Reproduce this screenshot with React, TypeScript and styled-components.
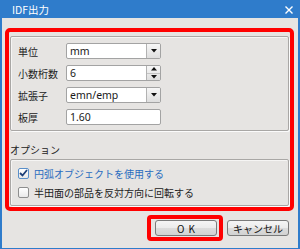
import styled, { createGlobalStyle } from "styled-components";

const Global = createGlobalStyle`
  html, body {
    margin: 0;
    padding: 0;
    background: #ffffff;
  }
  * { box-sizing: border-box; }
`;

const jp = `"Noto Sans CJK JP", "Noto Sans", sans-serif`;

const Frame = styled.div`
  width: 300px;
  height: 249px;
  background: #2f7ccb;
  padding: 0 2px 1px 2px;
  display: flex;
  flex-direction: column;
`;

const TitleBar = styled.div`
  height: 18px;
  display: flex;
  align-items: center;
  justify-content: space-between;
  padding: 0 5px 0 10px;
  color: #ffffff;
  font-family: ${jp};
  font-size: 10.5px;
`;

const CloseIcon = styled.svg`
  width: 8px;
  height: 8px;
  margin-top: 1px;
`;

const Body = styled.div`
  flex: 1;
  background: #e6e4e2;
  display: flex;
  flex-direction: column;
  font-family: ${jp};
  font-size: 10px;
  color: #222;
`;

const RedFrame = styled.div`
  margin: 10px 0 0 3px;
  width: 289px;
  height: 183px;
  border: 4px solid #ff0000;
  border-radius: 5px;
  padding: 4px 1px 0 1px;
  display: flex;
  flex-direction: column;
`;

const GroupBox = styled.div<{ $h: number }>`
  height: ${(p) => p.$h}px;
  border: 1px solid #a9a7a5;
  border-radius: 2px;
  box-shadow: 1px 1px 0 #fbfbfb, inset 1px 1px 0 #f6f5f4;
`;

const FieldGrid = styled.div`
  display: grid;
  grid-template-columns: 48px 95px;
  grid-auto-rows: 16px;
  row-gap: 6px;
  padding: 6px 0 0 7px;
`;

const Label = styled.div`
  display: flex;
  align-items: center;
  font-size: 10px;
  color: #222;
`;

const Field = styled.div`
  display: flex;
  height: 16px;
  border: 1px solid #a3a3a3;
  border-radius: 2px;
  background: #ffffff;
  overflow: hidden;
`;

const FieldText = styled.div`
  flex: 1;
  padding-left: 3px;
  display: flex;
  align-items: center;
  font-family: "Noto Sans", "Open Sans", sans-serif;
  font-size: 10.5px;
  color: #1a1a1a;
`;

const SideButton = styled.div`
  width: 14px;
  border-left: 1px solid #b2b2b2;
  background: linear-gradient(#f7f7f7, #dedede);
  display: flex;
  flex-direction: column;
  align-items: center;
  justify-content: center;
`;

const SpinHalf = styled.div<{ $top?: boolean }>`
  flex: 1;
  width: 100%;
  display: flex;
  align-items: center;
  justify-content: center;
  border-bottom: ${(p) => (p.$top ? "1px solid #c4c4c4" : "none")};
`;

const Tri = styled.svg`
  width: 6px;
  height: 4px;
`;

const SectionLabel = styled.div`
  margin: 12px 0 3px 0;
  height: 13px;
  line-height: 13px;
  font-size: 10px;
  color: #222;
`;

const CheckList = styled.div`
  display: flex;
  flex-direction: column;
  gap: 5px;
  padding: 6px 0 0 7px;
`;

const CheckRow = styled.div<{ $active?: boolean }>`
  height: 14px;
  display: flex;
  align-items: center;
  gap: 5px;
  color: ${(p) => (p.$active ? "#2a6cbf" : "#222")};
  font-size: 10px;
`;

const Box = styled.div<{ $checked?: boolean }>`
  width: 11px;
  height: 11px;
  border: 1px solid ${(p) => (p.$checked ? "#5a8fc9" : "#8e8e8e")};
  border-radius: 2px;
  background: linear-gradient(#ffffff, #e9e9e9);
  display: flex;
  align-items: center;
  justify-content: center;
`;

const ButtonRow = styled.div`
  margin-top: 4px;
  display: flex;
  justify-content: flex-end;
  align-items: center;
  gap: 4px;
  padding-right: 9px;
`;

const OkFrame = styled.div`
  width: 76px;
  height: 26px;
  border: 4px solid #ff0000;
  border-radius: 4px;
  padding: 0 2px 0 4px;
  display: flex;
  align-items: center;
`;

const Button = styled.div`
  width: 62px;
  height: 16px;
  border: 1px solid #7a7a7a;
  border-radius: 3px;
  background: linear-gradient(#f5f5f5 0%, #ebebeb 50%, #dcdcdc 51%, #d2d2d2 100%);
  display: flex;
  align-items: center;
  justify-content: center;
  font-size: 10px;
  color: #111;
`;

const OkText = styled.span`
  letter-spacing: 4px;
  margin-left: 4px;
`;

function DownArrow() {
  return (
    <Tri viewBox="0 0 6 4">
      <path d="M0 0 L6 0 L3 3.5 Z" fill="#111" />
    </Tri>
  );
}

function UpArrow() {
  return (
    <Tri viewBox="0 0 6 4">
      <path d="M0 3.5 L6 3.5 L3 0 Z" fill="#111" />
    </Tri>
  );
}

function Select({ value }: { value: string }) {
  return (
    <Field>
      <FieldText>{value}</FieldText>
      <SideButton>
        <DownArrow />
      </SideButton>
    </Field>
  );
}

function Spinner({ value }: { value: string }) {
  return (
    <Field>
      <FieldText>{value}</FieldText>
      <SideButton>
        <SpinHalf $top>
          <UpArrow />
        </SpinHalf>
        <SpinHalf>
          <DownArrow />
        </SpinHalf>
      </SideButton>
    </Field>
  );
}

function Check({ checked, active, label }: { checked?: boolean; active?: boolean; label: string }) {
  return (
    <CheckRow $active={active}>
      <Box $checked={checked}>
        {checked && (
          <svg width="9" height="8" viewBox="0 0 9 8">
            <path d="M1 4 L3.5 6.5 L8 1" stroke="#1d3f78" strokeWidth="1.8" fill="none" />
          </svg>
        )}
      </Box>
      {label}
    </CheckRow>
  );
}

export default function App() {
  return (
    <>
      <Global />
      <Frame>
        <TitleBar>
          <span>IDF出力</span>
          <CloseIcon viewBox="0 0 8 8">
            <path d="M0.5 0.5 L7.5 7.5 M7.5 0.5 L0.5 7.5" stroke="#fff" strokeWidth="1.4" />
          </CloseIcon>
        </TitleBar>
        <Body>
          <RedFrame>
            <GroupBox $h={95}>
              <FieldGrid>
                <Label>単位</Label>
                <Select value="mm" />
                <Label>小数桁数</Label>
                <Spinner value="6" />
                <Label>拡張子</Label>
                <Select value="emn/emp" />
                <Label>板厚</Label>
                <Field>
                  <FieldText>1.60</FieldText>
                </Field>
              </FieldGrid>
            </GroupBox>
            <SectionLabel>オプション</SectionLabel>
            <GroupBox $h={47}>
              <CheckList>
                <Check checked active label="円弧オブジェクトを使用する" />
                <Check label="半田面の部品を反対方向に回転する" />
              </CheckList>
            </GroupBox>
          </RedFrame>
          <ButtonRow>
            <OkFrame>
              <Button>
                <OkText>OK</OkText>
              </Button>
            </OkFrame>
            <Button>キャンセル</Button>
          </ButtonRow>
        </Body>
      </Frame>
    </>
  );
}
